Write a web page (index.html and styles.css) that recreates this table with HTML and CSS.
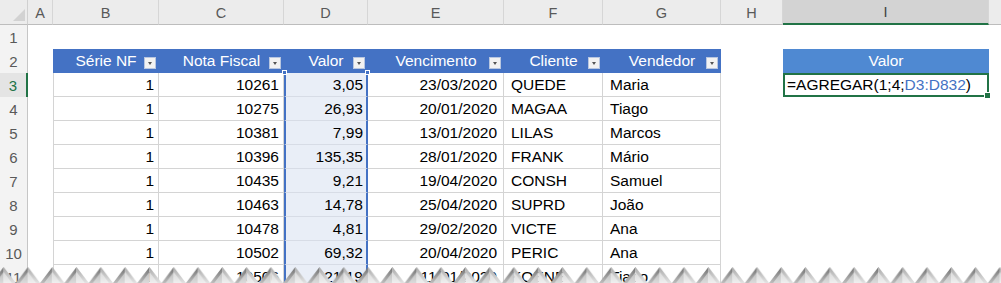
FILE: index.html
```html
<!DOCTYPE html>
<html lang="pt">
<head>
<meta charset="utf-8">
<title>AGREGAR</title>
<link rel="stylesheet" href="styles.css">
</head>
<body>
<div class="sheet">
  <div class="grid">
    <!-- column headers -->
    <div class="corner"><svg class="corner-tri" width="14" height="14" viewBox="0 0 14 14"><polygon points="13,1 13,13 1,13" fill="#d2d2d2"/></svg></div>
    <div class="ch">A</div>
    <div class="ch">B</div>
    <div class="ch">C</div>
    <div class="ch">D</div>
    <div class="ch">E</div>
    <div class="ch">F</div>
    <div class="ch">G</div>
    <div class="ch">H</div>
    <div class="ch sel">I</div>
    <div class="ch last"></div>

    <!-- row 1 -->
    <div class="rh">1</div>
    <div class="c"></div><div class="c"></div><div class="c"></div><div class="c"></div><div class="c"></div><div class="c"></div><div class="c"></div><div class="c"></div><div class="c"></div><div class="c"></div>

    <!-- row 2 -->
    <div class="rh">2</div>
    <div class="c"></div>
    <div class="th">Série NF<span class="fb"></span></div>
    <div class="th">Nota Fiscal<span class="fb"></span></div>
    <div class="th">Valor<span class="fb"></span></div>
    <div class="th">Vencimento<span class="fb"></span></div>
    <div class="th">Cliente<span class="fb"></span></div>
    <div class="th">Vendedor<span class="fb"></span></div>
    <div class="c"></div>
    <div class="vh">Valor</div>
    <div class="c"></div>

    <!-- row 3 -->
    <div class="rh act">3</div>
    <div class="c"></div>
    <div class="td first num">1</div>
    <div class="td num">10261</div>
    <div class="td d num top">3,05<span class="hdl hl"></span><span class="hdl hr"></span></div>
    <div class="td num date">23/03/2020</div>
    <div class="td txt">QUEDE</div>
    <div class="td txt">Maria</div>
    <div class="c"></div>
    <div class="fx">=AGREGAR(1;4;<span class="ref">D3:D832</span>)<span class="fill"></span></div>
    <div class="c"></div>

    <!-- row 4 -->
    <div class="rh">4</div>
    <div class="c"></div>
    <div class="td first num">1</div>
    <div class="td num">10275</div>
    <div class="td d num">26,93</div>
    <div class="td num date">20/01/2020</div>
    <div class="td txt">MAGAA</div>
    <div class="td txt">Tiago</div>
    <div class="c"></div><div class="c"></div><div class="c"></div>

    <!-- row 5 -->
    <div class="rh">5</div>
    <div class="c"></div>
    <div class="td first num">1</div>
    <div class="td num">10381</div>
    <div class="td d num">7,99</div>
    <div class="td num date">13/01/2020</div>
    <div class="td txt">LILAS</div>
    <div class="td txt">Marcos</div>
    <div class="c"></div><div class="c"></div><div class="c"></div>

    <!-- row 6 -->
    <div class="rh">6</div>
    <div class="c"></div>
    <div class="td first num">1</div>
    <div class="td num">10396</div>
    <div class="td d num">135,35</div>
    <div class="td num date">28/01/2020</div>
    <div class="td txt">FRANK</div>
    <div class="td txt">Mário</div>
    <div class="c"></div><div class="c"></div><div class="c"></div>

    <!-- row 7 -->
    <div class="rh">7</div>
    <div class="c"></div>
    <div class="td first num">1</div>
    <div class="td num">10435</div>
    <div class="td d num">9,21</div>
    <div class="td num date">19/04/2020</div>
    <div class="td txt">CONSH</div>
    <div class="td txt">Samuel</div>
    <div class="c"></div><div class="c"></div><div class="c"></div>

    <!-- row 8 -->
    <div class="rh">8</div>
    <div class="c"></div>
    <div class="td first num">1</div>
    <div class="td num">10463</div>
    <div class="td d num">14,78</div>
    <div class="td num date">25/04/2020</div>
    <div class="td txt">SUPRD</div>
    <div class="td txt">João</div>
    <div class="c"></div><div class="c"></div><div class="c"></div>

    <!-- row 9 -->
    <div class="rh">9</div>
    <div class="c"></div>
    <div class="td first num">1</div>
    <div class="td num">10478</div>
    <div class="td d num">4,81</div>
    <div class="td num date">29/02/2020</div>
    <div class="td txt">VICTE</div>
    <div class="td txt">Ana</div>
    <div class="c"></div><div class="c"></div><div class="c"></div>

    <!-- row 10 -->
    <div class="rh">10</div>
    <div class="c"></div>
    <div class="td first num">1</div>
    <div class="td num">10502</div>
    <div class="td d num">69,32</div>
    <div class="td num date">20/04/2020</div>
    <div class="td txt">PERIC</div>
    <div class="td txt">Ana</div>
    <div class="c"></div><div class="c"></div><div class="c"></div>

    <!-- row 11 -->
    <div class="rh">11</div>
    <div class="c"></div>
    <div class="td first num">1</div>
    <div class="td num">10506</div>
    <div class="td d num">21,19</div>
    <div class="td num date">11/01/2020</div>
    <div class="td txt">KOENE</div>
    <div class="td txt">Tiago</div>
    <div class="c"></div><div class="c"></div><div class="c"></div>
  </div>

  <svg class="torn" width="1001" height="17" viewBox="0 0 1001 17" preserveAspectRatio="none">
    <defs>
      <linearGradient id="gl" x1="0" y1="0" x2="0" y2="1">
        <stop offset="0" stop-color="#6f6f6f"/>
        <stop offset="1" stop-color="#bdbdbd"/>
      </linearGradient>
      <linearGradient id="gr" x1="0" y1="0" x2="0" y2="1">
        <stop offset="0" stop-color="#a9a9a9"/>
        <stop offset="1" stop-color="#e2e2e2"/>
      </linearGradient>
      <pattern id="teeth" x="15.85" y="0" width="24.3" height="17" patternUnits="userSpaceOnUse">
        <polygon points="0,17 12.15,1 12.15,17" fill="url(#gl)"/>
        <polygon points="12.15,1 24.3,17 12.15,17" fill="url(#gr)"/>
        <polygon points="4,17 12.15,6 20.3,17" fill="#ffffff" opacity="0.45"/>
      </pattern>
    </defs>
    <rect x="0" y="0" width="1001" height="17" fill="url(#teeth)"/>
  </svg>
</div>
</body>
</html>
```

FILE: styles.css
```css
html, body {
  margin: 0;
  padding: 0;
  background: #ffffff;
}

body {
  width: 1001px;
  height: 283px;
  overflow: hidden;
  font-family: "Liberation Sans", Arial, sans-serif;
  font-size: 15.5px;
  color: #000;
}

.sheet {
  position: relative;
  width: 1001px;
  height: 283px;
  overflow: hidden;
}

.grid {
  display: grid;
  grid-template-columns: 28px 25px 106px 125px 84px 136px 99px 118px 62px 206px 1fr;
  grid-template-rows: 25px repeat(11, 24px);
}

.grid > div {
  box-sizing: border-box;
  display: flex;
  align-items: center;
  white-space: nowrap;
}

/* corner */
.corner {
  background: #ececec;
  border-right: 1px solid #d0d0d0;
  border-bottom: 1px solid #bdbdbd;
  justify-content: flex-end;
  align-items: flex-end !important;
}

.corner-tri {
  display: block;
  margin: 0 1px 2px 0;
}

/* column headers */
.ch {
  background: #ececec;
  color: #595959;
  font-size: 14.5px;
  justify-content: center;
  border-right: 1px solid #d6d6d6;
  border-bottom: 1px solid #bdbdbd;
  padding-top: 1px;
}

.ch.sel {
  background: #d3d3d3;
  color: #404040;
  border-bottom: 2px solid #217346;
}

.ch.last {
  border-right: none;
}

/* row headers */
.rh {
  background: #f3f3f3;
  color: #595959;
  font-size: 15px;
  justify-content: center;
  border-right: 1px solid #c6c6c6;
}

.rh.act {
  color: #217346;
  background: #e4e4e4;
  border-right: 2px solid #217346;
}

/* empty cell */
.c {
  background: #ffffff;
}

/* table header */
.th {
  position: relative;
  background: #4472c4;
  color: #ffffff;
  justify-content: center;
}

.fb {
  position: absolute;
  right: 3px;
  bottom: 4px;
  width: 12px;
  height: 12px;
  box-sizing: border-box;
  background: #f2f2f2;
  border: 1px solid #b8c6e0;
}

.fb::after {
  content: "";
  position: absolute;
  left: 3px;
  top: 4px;
  border-left: 2.5px solid transparent;
  border-right: 2.5px solid transparent;
  border-top: 3px solid #555555;
}

/* table body */
.td {
  background: #ffffff;
  border-right: 1px solid #d4d4d4;
  border-bottom: 1px solid #d4d4d4;
  padding: 0 4px 0 6px;
}

.td.first {
  border-left: 1px solid #d4d4d4;
}

.num {
  justify-content: flex-end;
}

.num.date {
  padding-right: 6px;
}

.txt {
  justify-content: flex-start;
  padding-left: 7px;
}

.td.d {
  position: relative;
  background: #e9eef7;
  border-left: 2px solid #4472c4;
  border-right: 2px solid #4472c4;
  border-bottom: 1px solid #d7dce6;
  padding-right: 3px;
}

.hdl {
  position: absolute;
  top: -3px;
  width: 5px;
  height: 5px;
  background: #4472c4;
  border: 1px solid #ffffff;
  box-sizing: border-box;
}

.hdl.hl {
  left: -4px;
}

.hdl.hr {
  right: -4px;
}

/* I column */
.vh {
  background: #4f89d2;
  color: #ffffff;
  justify-content: center;
}

.fx {
  position: relative;
  border: 2px solid #217346;
  padding-left: 2px;
  background: #ffffff;
}

.ref {
  color: #4472c4;
}

.fill {
  position: absolute;
  right: -4px;
  bottom: -4px;
  width: 5px;
  height: 5px;
  background: #217346;
  border: 1px solid #ffffff;
  box-sizing: content-box;
}

/* torn edge */
.torn {
  position: absolute;
  left: 0;
  bottom: 0;
  display: block;
}
```
